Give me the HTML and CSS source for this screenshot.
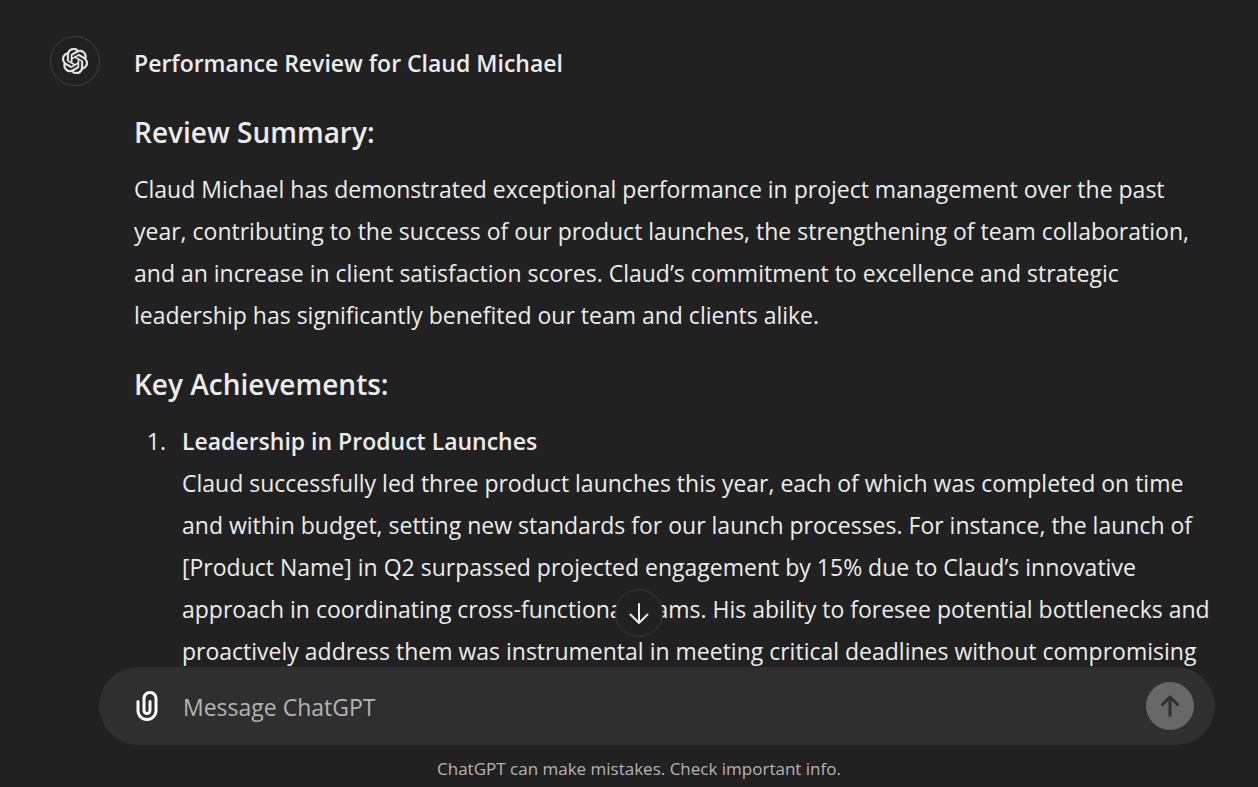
FILE: index.html
```html
<!DOCTYPE html>
<html lang="en">
<head>
<meta charset="utf-8">
<meta name="viewport" content="width=device-width, initial-scale=1">
<title>ChatGPT</title>
<link rel="stylesheet" href="styles.css">
</head>
<body>
<main class="conversation">
  <article class="message">
    <div class="avatar">
      <svg class="logo" viewBox="0 0 24 24" aria-hidden="true"><path fill="currentColor" d="M22.2819 9.8211a5.9847 5.9847 0 0 0-.5157-4.9108 6.0462 6.0462 0 0 0-6.5098-2.9A6.0651 6.0651 0 0 0 4.9807 4.1818a5.9847 5.9847 0 0 0-3.9977 2.9 6.0462 6.0462 0 0 0 .7427 7.0966 5.98 5.98 0 0 0 .511 4.9107 6.051 6.051 0 0 0 6.5146 2.9001A5.9847 5.9847 0 0 0 13.2599 24a6.0557 6.0557 0 0 0 5.7718-4.2058 5.9894 5.9894 0 0 0 3.9977-2.9001 6.0557 6.0557 0 0 0-.7475-7.0729zm-9.022 12.6081a4.4755 4.4755 0 0 1-2.8764-1.0408l.1419-.0804 4.7783-2.7582a.7948.7948 0 0 0 .3927-.6813v-6.7369l2.02 1.1686a.071.071 0 0 1 .038.052v5.5826a4.504 4.504 0 0 1-4.4945 4.4944zm-9.6607-4.1254a4.4708 4.4708 0 0 1-.5346-3.0137l.142.0852 4.783 2.7582a.7712.7712 0 0 0 .7806 0l5.8428-3.3685v2.3324a.0804.0804 0 0 1-.0332.0615L9.74 19.9502a4.4992 4.4992 0 0 1-6.1408-1.6464zM2.3408 7.8956a4.485 4.485 0 0 1 2.3655-1.9728V11.6a.7664.7664 0 0 0 .3879.6765l5.8144 3.3543-2.0201 1.1685a.0757.0757 0 0 1-.071 0l-4.8303-2.7865A4.504 4.504 0 0 1 2.3408 7.872zm16.5963 3.8558L13.1038 8.364 15.1192 7.2a.0757.0757 0 0 1 .071 0l4.8303 2.7913a4.4944 4.4944 0 0 1-.6765 8.1042v-5.6772a.79.79 0 0 0-.407-.667zm2.0107-3.0231l-.142-.0852-4.7735-2.7818a.7759.7759 0 0 0-.7854 0L9.409 9.2297V6.8974a.0662.0662 0 0 1 .0284-.0615l4.8303-2.7866a4.4992 4.4992 0 0 1 6.6802 4.66zM8.3065 12.863l-2.02-1.1638a.0804.0804 0 0 1-.038-.0567V6.0742a4.4992 4.4992 0 0 1 7.3757-3.4537l-.142.0805L8.704 5.459a.7948.7948 0 0 0-.3927.6813zm1.0976-2.3654l2.602-1.4998 2.6069 1.4998v2.9994l-2.5974 1.4997-2.6067-1.4997Z"/></svg>
    </div>
    <div class="prose">
      <p><strong>Performance Review for Claud Michael</strong></p>
      <h3>Review Summary:</h3>
      <p>Claud Michael has demonstrated exceptional performance in project management over the past year, contributing to the success of our product launches, the strengthening of team collaboration, and an increase in client satisfaction scores. Claud’s commitment to excellence and strategic leadership has significantly benefited our team and clients alike.</p>
      <h3>Key Achievements:</h3>
      <ol>
        <li><strong>Leadership in Product Launches</strong><br>Claud successfully led three product launches this year, each of which was completed on time and within budget, setting new standards for our launch processes. For instance, the launch of [Product Name] in Q2 surpassed projected engagement by 15% due to Claud’s innovative approach in coordinating cross-functional teams. His ability to foresee potential bottlenecks and proactively address them was instrumental in meeting critical deadlines without compromising</li>
      </ol>
    </div>
  </article>
</main>
<footer class="dock">
  <button class="scroll-down" type="button" aria-label="Scroll to bottom">
    <svg class="arrow" viewBox="0 0 24 24" aria-hidden="true"><path class="line" d="M12 3v19M3.500 13.500 12 22l8.500-8.500"/></svg>
  </button>
  <form class="composer">
    <button class="attach" type="button" aria-label="Attach files">
      <svg class="clip" viewBox="0 0 24 24" aria-hidden="true"><path fill="currentColor" d="M9 7C9 4.239 11.239 2 14 2s5 2.239 5 5v8c0 3.866-3.134 7-7 7s-7-3.134-7-7V9a1 1 0 0 1 2 0v6c0 2.761 2.239 5 5 5s5-2.239 5-5V7a3 3 0 0 0-6 0v8a1 1 0 0 0 2 0V9a1 1 0 0 1 2 0v6a3 3 0 0 1-6 0V7Z"/></svg>
    </button>
    <input class="prompt" type="text" placeholder="Message ChatGPT" aria-label="Message ChatGPT">
    <button class="send" type="button" aria-label="Send message">
      <svg class="arrow" viewBox="0 0 24 24" aria-hidden="true"><path class="line thick" d="M12 21.500V3M4.500 10.500 12 3l7.500 7.500"/></svg>
    </button>
  </form>
  <p class="notice">ChatGPT can make mistakes. Check important info.</p>
</footer>
</body>
</html>
```
FILE: styles.css
```css
* {
  box-sizing: border-box;
}

body {
  display: flex;
  flex-direction: column;
  height: 100vh;
  margin: 0;
  overflow: hidden;
  background: #212121;
  color: #ececec;
  font-family: "Segoe UI", "Open Sans", "Noto Sans", sans-serif;
  font-size: 23px;
  line-height: 42px;
}

button {
  display: grid;
  place-items: center;
  padding: 0;
  border: 0;
  border-radius: 50%;
  background: none;
  color: inherit;
}

.conversation {
  flex: 1;
  min-height: 0;
  overflow: hidden;
  padding: 36px 40px 0 50px;
}

.message {
  display: flex;
  gap: 34px;
}

.avatar {
  display: grid;
  flex: none;
  place-items: center;
  width: 50px;
  height: 50px;
  border: 1px solid #424242;
  border-radius: 50%;
}

.logo {
  width: 26px;
  height: 26px;
  stroke: currentColor;
  stroke-width: 0.4;
}

.prose {
  flex: 1;
  min-width: 0;
  padding-top: 6px;
}

.prose p {
  margin: 0;
}

.prose strong {
  font-weight: 600;
}

.prose h3 {
  margin: 27px 0 15px;
  font-size: 28px;
  font-weight: 600;
}

.prose ol {
  margin: 0;
  padding-left: 38px;
}

.prose li {
  padding-left: 10px;
}

.dock {
  position: relative;
  flex: none;
}

.scroll-down {
  position: absolute;
  bottom: 100%;
  left: 50%;
  width: 48px;
  height: 48px;
  margin: 0 0 30px -14px;
  border: 1px solid #383838;
  background: #212121;
}

.arrow {
  width: 24px;
  height: 24px;
}

.line {
  fill: none;
  stroke: currentColor;
  stroke-width: 2;
  stroke-linecap: round;
  stroke-linejoin: round;
}

.thick {
  stroke-width: 3;
}

.composer {
  display: flex;
  align-items: center;
  height: 78px;
  margin: 0 43px 0 99px;
  padding: 0 21px 0 30px;
  border-radius: 39px;
  background: #2f2f2f;
}

.attach {
  color: #fff;
}

.clip {
  width: 36px;
  height: 36px;
}

.prompt {
  flex: 1;
  min-width: 0;
  margin: 0 18px;
  padding: 2px 0 0;
  border: 0;
  outline: 0;
  background: none;
  color: #ececec;
  font: inherit;
}

.prompt::placeholder {
  color: #b4b4b4;
  opacity: 1;
}

.send {
  width: 48px;
  height: 48px;
  background: #676767;
  color: #2f2f2f;
}

.notice {
  margin: 0;
  padding: 6px 0 0 20px;
  color: #b4b4b4;
  font-size: 17px;
  line-height: 36px;
  text-align: center;
}
```
